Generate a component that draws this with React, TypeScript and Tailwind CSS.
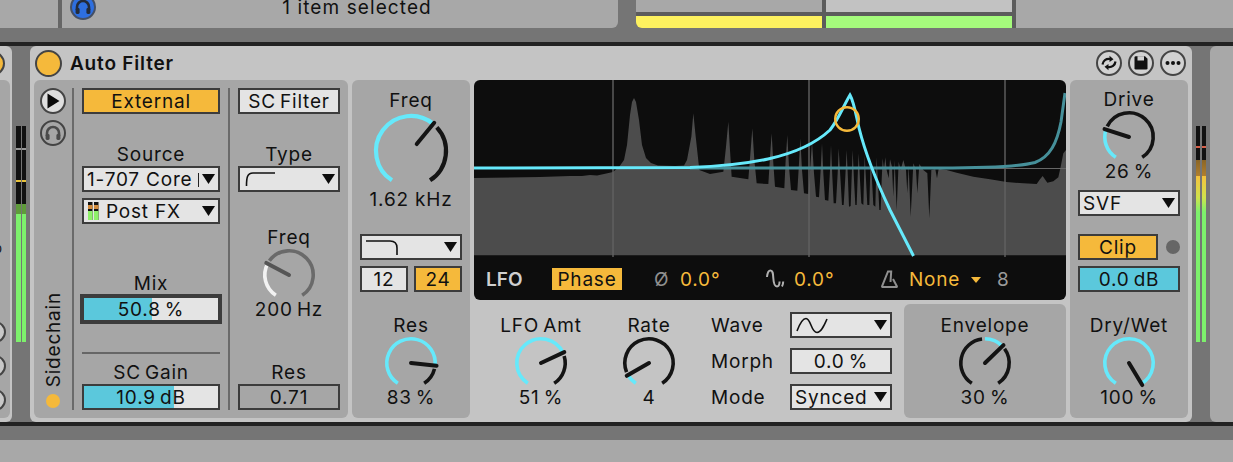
import React from "react";

const CYAN = "#66e9fb";

function pol(c: number, cy: number, r: number, a: number) {
  const t = (a * Math.PI) / 180;
  return [c + r * Math.sin(t), cy - r * Math.cos(t)];
}
function arc(c: number, cy: number, r: number, a: number, b: number) {
  const [x1, y1] = pol(c, cy, r, a);
  const [x2, y2] = pol(c, cy, r, b);
  return `M${x1} ${y1}A${r} ${r} 0 ${b - a > 180 ? 1 : 0} 1 ${x2} ${y2}`;
}

function Dial({
  angle,
  size = 54,
  h = 51,
  r = 24.2,
  sw = 3.6,
  from = -147,
  on = CYAN,
  off = "#141414",
  needle = "#141414",
  start = 0,
  ns = 4,
}: {
  angle: number;
  size?: number;
  h?: number;
  r?: number;
  sw?: number;
  from?: number;
  on?: string;
  off?: string;
  needle?: string;
  start?: number;
  ns?: number;
}) {
  const c = size / 2;
  const end = 147;
  const lo = Math.min(from, angle);
  const hi = Math.max(from, angle);
  const [nx1, ny1] = pol(c, c, start, angle);
  const [nx2, ny2] = pol(c, c, r + 1.5, angle);
  return (
    <svg width={size} height={h} viewBox={`0 0 ${size} ${h}`} className="block overflow-visible">
      <g fill="none" strokeWidth={sw}>
        {lo > -147 && <path d={arc(c, c, r, -147, lo - 7)} stroke={off} />}
        <path d={arc(c, c, r, lo, hi)} stroke={on} />
        {hi + 8 < end && <path d={arc(c, c, r, hi + 8, end)} stroke={off} />}
      </g>
      <line x1={nx1} y1={ny1} x2={nx2} y2={ny2} stroke={needle} strokeWidth={ns} strokeLinecap="round" />
    </svg>
  );
}

function Knob(props: {
  label: string;
  value: string;
  angle: number;
  from?: number;
  on?: string;
  off?: string;
  needle?: string;
}) {
  const { label, value, ...dial } = props;
  return (
    <div className="flex w-[94px] flex-col items-center">
      <div className="flex h-[23px] items-center whitespace-nowrap pt-[1px]">{label}</div>
      <Dial {...dial} />
      <div className="flex h-[20px] items-center whitespace-nowrap pt-[1px]">{value}</div>
    </div>
  );
}

function Caret() {
  return (
    <svg width="13" height="10" viewBox="0 0 13 10" className="shrink-0">
      <path d="M0 0H13L6.5 10Z" fill="#0d0d0d" />
    </svg>
  );
}

function Box({ children, className = "" }: { children?: React.ReactNode; className?: string }) {
  return (
    <div className={`flex h-[26px] items-center justify-center border-2 border-[#3c3c3c] pt-[1px] whitespace-nowrap ${className}`}>
      {children}
    </div>
  );
}

function Select({ children, className = "" }: { children?: React.ReactNode; className?: string }) {
  return (
    <div className={`flex h-[26px] items-center justify-between border-2 border-[#3c3c3c] bg-[#e4e4e4] pl-[3px] pr-[3px] whitespace-nowrap ${className}`}>
      <div className="flex flex-1 items-center pt-[1px]">{children}</div>
      <Caret />
    </div>
  );
}

function RoundBtn({ children, bg = "bg-[#d2d2d2]" }: { children: React.ReactNode; bg?: string }) {
  return (
    <div className={`flex h-[26px] w-[26px] items-center justify-center rounded-full border-2 border-[#444] ${bg}`}>
      {children}
    </div>
  );
}

function Phones({ color = "#444" }: { color?: string }) {
  return (
    <svg width="18" height="18" viewBox="0 0 18 18">
      <path d="M3 12V9a6 6 0 0 1 12 0v3" fill="none" stroke={color} strokeWidth="2.6" />
      <rect x="1.6" y="10" width="4" height="6" rx="1.4" fill={color} />
      <rect x="12.4" y="10" width="4" height="6" rx="1.4" fill={color} />
    </svg>
  );
}

function Meter({ children }: { children: React.ReactNode }) {
  return <div className="flex h-[216px] w-[4.5px] flex-col">{children}</div>;
}

const pagePts: number[][] = [
  [474, 178], [540, 177], [570, 176], [582, 176], [590, 175], [597, 175.5], [604, 174], [613, 172], [619, 167],
  [624, 160], [627, 145], [630, 115], [632, 102], [634, 98], [636, 102], [639, 120], [642, 145], [646, 158],
  [651, 163], [658, 165.5], [675, 166], [684, 165.5], [687, 160],
];
const zoomPts: number[][] = [
  [4, 200], [10, 130], [16, 190], [28, 300], [60, 312], [100, 305], [108, 230], [115, 155], [120, 240], [125, 320], [175, 328],
  [182, 240], [187, 175], [193, 270], [200, 340], [235, 342], [240, 260], [245, 190], [250, 280], [255, 350], [283, 355],
  [287, 270], [292, 195], [297, 290], [303, 360], [322, 362], [327, 280], [331, 205], [336, 300], [342, 370], [355, 372],
  [361, 290], [366, 215], [372, 310], [378, 380], [387, 382], [392, 300], [396, 220], [400, 310], [405, 390], [415, 392],
  [420, 300], [423, 225], [427, 320], [431, 400], [438, 400], [443, 310], [446, 235], [451, 320], [456, 405], [461, 405],
  [466, 320], [470, 240], [474, 330], [477, 410], [482, 408], [485, 320], [488, 240], [492, 330], [496, 405], [500, 405],
  [503, 320], [506, 250], [510, 330], [514, 400], [520, 405], [522, 330], [524, 255], [528, 330], [532, 405], [538, 405],
  [540, 330], [542, 262], [546, 330], [550, 405], [556, 410], [558, 330], [560, 262], [564, 340], [568, 420], [572, 420],
  [575, 330], [578, 265], [582, 300], [586, 262], [590, 300], [596, 325], [600, 268], [606, 290], [610, 380], [614, 270],
  [620, 420], [626, 275], [632, 300], [640, 270], [648, 300], [652, 370], [656, 285], [662, 440], [670, 280], [678, 300],
  [682, 370], [688, 282], [700, 300], [712, 310], [718, 445], [724, 300], [736, 298], [741, 325], [746, 296], [770, 300],
  [800, 308], [850, 320], [900, 328], [950, 336], [1000, 340], [1040, 342], [1050, 328], [1058, 318], [1072, 338], [1090, 334],
  [1105, 322], [1112, 290], [1120, 250], [1128, 240], [1128, 556], [-700, 556],
];
const z = (p: number[]) => [690 + p[0] / 3, 70 + p[1] / 3];
const spectrum = [...pagePts, ...zoomPts.map(z)].map((p) => p.join(",")).join(" ") + " 474,256";

function Spectrum() {
  return (
    <svg width="592" height="177" viewBox="474 80 592 177" className="block">
      <polygon points={spectrum} fill="#4c4c4c" />
      <g stroke="#626262" strokeWidth="1.4">
        <line x1="613" y1="80" x2="613" y2="257" />
        <line x1="809" y1="80" x2="809" y2="257" />
        <line x1="1005" y1="80" x2="1005" y2="257" />
      </g>
      <line x1="720" y1="168.5" x2="1066" y2="168.5" stroke="#666" strokeWidth="1" />
      <path
        d="M690 168H940C1000 168 1022 166 1035 162.5C1050 157 1057 143 1061 122L1065 93"
        fill="none"
        stroke="#46909a"
        strokeWidth="3"
      />
      <path
        d="M474 168L690 167.5C720 166.5 745 164 768 159C795 153 815 144 830 130C838 120 844 105 850 95C854 102 856 115 859 128C864 148 872 172 890 210L913.5 256"
        fill="none"
        stroke={CYAN}
        strokeWidth="3"
      />
      <circle cx="847" cy="119" r="11.8" fill="none" stroke="#f5b93b" strokeWidth="2.4" />
    </svg>
  );
}

export default function App() {
  return (
    <div className="flex h-[462px] w-[1233px] flex-col overflow-hidden bg-[#a6a6a6] text-[19px] leading-none tracking-[0.8px] [word-spacing:-2px] text-[#111] [font-family:Inter,'Liberation_Sans',sans-serif]">
      {/* top strip */}
      <div className="flex h-[28px] shrink-0 bg-[#757575]">
        <div className="w-[58px] bg-[#a8a8a8]" />
        <div className="w-[4px] bg-[#666]" />
        <div className="flex w-[556px] rounded-br-md bg-[#a8a8a8]">
          <div className="ml-[8px] -mt-[6px] h-[26px] w-[26px] rounded-full border-2 border-[#445066] bg-[#2e6fe0] flex items-center justify-center">
            <Phones color="#232b3a" />
          </div>
          <div className="flex h-[14px] flex-1 items-center justify-center whitespace-nowrap pt-[1px] tracking-[1.1px] [word-spacing:0px]">1 item selected</div>
        </div>
        <div className="w-[18px]" />
        <div className="flex w-[186px] flex-col">
          <div className="h-[12px] bg-[#a8a8a8]" />
          <div className="h-[4px] bg-[#5c5c5c]" />
          <div className="h-[12px] rounded-bl-md bg-[#fdf15f]" />
        </div>
        <div className="w-[4px] bg-[#5c5c5c]" />
        <div className="flex w-[186px] flex-col">
          <div className="h-[12px] bg-[#c2c2c2]" />
          <div className="h-[4px] bg-[#5c5c5c]" />
          <div className="h-[12px] bg-[#a5fb7c]" />
        </div>
        <div className="w-[4px] bg-[#5c5c5c]" />
        <div className="flex-1 bg-[#a8a8a8]" />
      </div>
      <div className="h-[14px] shrink-0 bg-[#757575]" />
      <div className="h-[4px] shrink-0 bg-[#222]" />

      {/* device row */}
      <div className="flex h-[376px] shrink-0 bg-[#757575]">
        {/* previous device, cut off */}
        <div className="flex w-[12px] flex-col overflow-hidden rounded-r-md bg-[#c4c4c4]">
          <div className="flex h-[34px] items-center">
            <div className="-ml-[20px] h-[25px] w-[25px] shrink-0 rounded-full border-2 border-[#444] bg-[#f5b93b]" />
          </div>
          <div className="flex h-[338px] w-[10px] flex-col overflow-hidden rounded-r-md bg-[#a6a6a6]">
            <div className="mt-[162px] h-[12px] text-[13px] -ml-[6px]">b</div>
            <div className="mt-[67px] flex flex-col gap-[12px]">
              <div className="-ml-[16px] h-[22px] w-[22px] shrink-0 rounded-full border-2 border-[#444] bg-[#c8c8c8]" />
              <div className="-ml-[16px] h-[22px] w-[22px] shrink-0 rounded-full border-2 border-[#444] bg-[#c8c8c8]" />
              <div className="-ml-[16px] h-[22px] w-[22px] shrink-0 rounded-full border-2 border-[#444] bg-[#c8c8c8]" />
            </div>
          </div>
        </div>
        {/* left meter */}
        <div className="flex w-[18px] justify-center gap-[1px] pt-[80px]">
          {[0, 1].map((i) => (
            <Meter key={i}>
              <div className="h-[22px] bg-[#111]" />
              <div className="h-[1.5px] bg-[#9a9a9a]" />
              <div className="h-[30px] bg-[#111]" />
              <div className="h-[2px] bg-[#e8c23c]" />
              <div className="h-[22.5px] bg-[#111]" />
              <div className="h-[10px] bg-[#5f9b3b]" />
              <div className="flex-1 bg-[#7df06c]" />
            </Meter>
          ))}
        </div>

        {/* Auto Filter */}
        <div className="flex w-[1162px] flex-col rounded-l-md rounded-r-md bg-[#c4c4c4]">
          <div className="flex h-[34px] items-center pl-[5px] pr-[6px]">
            <div className="h-[27px] w-[27px] rounded-full border-2 border-[#444] bg-[#f5b93b]" />
            <div className="ml-[8px] pt-[1px] font-semibold [word-spacing:0px]">Auto Filter</div>
            <div className="ml-auto flex gap-[6px]">
              <RoundBtn>
                <svg width="18" height="18" viewBox="0 0 18 18" fill="none" stroke="#111" strokeWidth="2.2">
                  <path d="M2.5 10.5C3 6.5 6 4.5 10 5" />
                  <path d="M15.5 7.5C15 11.5 12 13.5 8 13" />
                  <path d="M9.5 1.8L13.5 5.2L9.5 8Z" fill="#111" stroke="none" />
                  <path d="M8.5 16.2L4.5 12.8L8.5 10Z" fill="#111" stroke="none" />
                </svg>
              </RoundBtn>
              <RoundBtn>
                <svg width="16" height="16" viewBox="0 0 16 16">
                  <path d="M1.5 2.5Q1.5 1.2 2.8 1.2H12L14.5 3.7V13.2Q14.5 14.5 13.2 14.5H2.8Q1.5 14.5 1.5 13.2Z" fill="#111" />
                  <rect x="4.5" y="1.2" width="6.5" height="4.3" fill="#d2d2d2" />
                </svg>
              </RoundBtn>
              <RoundBtn>
                <svg width="18" height="6" viewBox="0 0 18 6" fill="#111">
                  <circle cx="3.5" cy="3" r="2" />
                  <circle cx="9" cy="3" r="2" />
                  <circle cx="14.5" cy="3" r="2" />
                </svg>
              </RoundBtn>
            </div>
          </div>

          <div className="flex gap-[4px] px-[4px]">
            {/* Sidechain panel */}
            <div className="flex h-[338px] w-[314px] rounded-md bg-[#a6a6a6] pt-[8px]">
              <div className="flex h-[322px] w-[38px] flex-col items-center">
                <RoundBtn bg="bg-[#dedede]">
                  <svg width="14" height="16" viewBox="0 0 14 16">
                    <path d="M1.5 0.5L13.5 8L1.5 15.5Z" fill="#0a0a0a" />
                  </svg>
                </RoundBtn>
                <div className="mt-[6px]">
                  <RoundBtn bg="bg-[#a6a6a6]">
                    <Phones color="#4a4a4a" />
                  </RoundBtn>
                </div>
                <div className="mt-auto [writing-mode:vertical-rl] rotate-180 whitespace-nowrap">Sidechain</div>
                <div className="mb-[2px] mt-[7px] h-[14px] w-[14px] rounded-full bg-[#f5b93b]" />
              </div>
              <div className="h-[322px] w-[1.5px] bg-[#6a6a6a]" />
              <div className="ml-[8.5px] flex w-[138px] flex-col">
                <Box className="bg-[#f5b93b]">External</Box>
                <div className="mt-[27px] flex h-[25px] items-center justify-center pt-[1px]">Source</div>
                <Select>
                  <span className="flex-1 [word-spacing:0px]">1-707 Core</span>
                  <span className="mr-[3px] h-[14px] w-[1px] bg-[#222]" />
                </Select>
                <Select className="mt-[6px]">
                  <svg width="11" height="18" viewBox="0 0 11 18" className="ml-[1px] -mt-[1px]">
                    <rect x="0" y="0" width="4.5" height="18" fill="#111" />
                    <rect x="6" y="0" width="4.5" height="18" fill="#111" />
                    <rect x="0" y="3" width="4.5" height="4" fill="#d08a3c" />
                    <rect x="6" y="3" width="4.5" height="4" fill="#d08a3c" />
                    <rect x="0" y="9" width="4.5" height="9" fill="#8ff06a" />
                    <rect x="6" y="9" width="4.5" height="9" fill="#8ff06a" />
                  </svg>
                  <span className="ml-[7px] flex-1 [word-spacing:0px]">Post FX</span>
                </Select>
                <div className="mt-[47px] flex h-[23px] items-center justify-center pt-[1px]">Mix</div>
                <div className="-mx-[2px] flex h-[30px] items-center justify-center border-4 border-[#3c3c3c] bg-[linear-gradient(to_right,#5bc8dc_50.8%,#e4e4e4_50.8%)] pt-[1px]">
                  50.8 %
                </div>
                <div className="mt-[28px] h-[2px] bg-[#666]" />
                <div className="mt-[5px] flex h-[25px] items-center justify-center pt-[1px]">SC Gain</div>
                <Box className="bg-[linear-gradient(to_right,#5bc8dc_67%,#e4e4e4_67%)]">10.9 dB</Box>
              </div>
              <div className="ml-[8px] h-[322px] w-[1.5px] bg-[#6a6a6a]" />
              <div className="ml-[8.5px] flex w-[102px] flex-col">
                <Box className="bg-[#e4e4e4]">SC Filter</Box>
                <div className="mt-[27px] flex h-[25px] items-center justify-center pt-[1px]">Type</div>
                <Select>
                  <svg width="32" height="16" viewBox="0 0 32 16" fill="none" stroke="#111" strokeWidth="1.6" className="-mt-[1px]">
                    <path d="M3.5 15C3.5 7 4 2 10 2H32" />
                  </svg>
                </Select>
                <div className="mt-[33px] flex justify-center">
                  <Knob label="Freq" value="200 Hz" angle={-62} on="#f2f2f2" off="#6a6a6a" needle="#555" />
                </div>
                <div className="mt-[40px] flex h-[25px] items-center justify-center pt-[1px]">Res</div>
                <Box>0.71</Box>
              </div>
            </div>

            {/* Freq panel */}
            <div className="flex h-[338px] w-[118px] flex-col items-center rounded-md bg-[#a6a6a6] pt-[8px]">
              <div className="flex h-[24px] items-center pt-[1px]">Freq</div>
              <Dial angle={39.5} size={78} h={77} r={35} sw={4.2} start={9} ns={4} />
              <div className="flex h-[20px] items-center whitespace-nowrap pt-[1px] [word-spacing:0px]">1.62 kHz</div>
              <Select className="mt-[25px] w-[102px]">
                <svg width="34" height="16" viewBox="0 0 34 16" fill="none" stroke="#111" strokeWidth="1.6" className="ml-[1px] -mt-[1px]">
                  <path d="M0 2H24C29 2 31 5 31 9V16" />
                </svg>
              </Select>
              <div className="mt-[6px] flex w-[102px] justify-between">
                <Box className="w-[48px] bg-[#e4e4e4]">12</Box>
                <Box className="w-[48px] bg-[#f5b93b]">24</Box>
              </div>
              <div className="mt-[21px]">
                <Knob label="Res" value="83 %" angle={96} />
              </div>
            </div>

            {/* Centre */}
            <div className="flex w-[592px] flex-col">
              <div className="h-[220px] overflow-hidden rounded-md bg-[#0d0d0d]">
                <Spectrum />
                <div className="flex h-[43px] items-center text-[#f5b93b]">
                  <span className="ml-[12px] w-[66px] pt-[1px] font-semibold tracking-normal text-[#cfcfcf]">LFO</span>
                  <span className="flex h-[22px] w-[70px] items-center justify-center bg-[#f5b93b] pt-[1px] text-[#111]">Phase</span>
                  <span className="ml-[32px] w-[26px] pt-[1px] text-[#8f8f8f]">Ø</span>
                  <span className="w-[86px] pt-[1px]">0.0°</span>
                  <svg width="20" height="20" viewBox="0 0 20 20" fill="none" stroke="#b0b0b0" strokeWidth="2" className="mt-[1px]">
                    <path d="M1 8C1.5 3 3 1.5 4.5 1.5C7 1.5 7 5 7.3 9C7.6 14 9 17.5 11 17.5C12.8 17.5 13.5 15 13.6 12.5" />
                    <path d="M17.2 12.5C17.2 14.5 16.8 16 16 17.5" />
                  </svg>
                  <span className="ml-[8px] w-[87px] pt-[1px]">0.0°</span>
                  <svg width="17" height="19" viewBox="0 0 17 19" fill="none" stroke="#8f8f8f" strokeWidth="2" className="mt-[1px]">
                    <path d="M0.8 17L7 1.5H10.2L9.5 12" />
                    <path d="M12 9L16.2 17" />
                    <path d="M0.5 17H16.5" />
                  </svg>
                  <span className="ml-[11px] w-[62px] pt-[1px]">None</span>
                  <svg width="10" height="6" viewBox="0 0 10 6" className="mt-[2px]">
                    <path d="M0 0H10L5 6Z" fill="#f5b93b" />
                  </svg>
                  <span className="ml-[16px] pt-[1px] text-[#9a9a9a]">8</span>
                </div>
              </div>
              <div className="mt-[4px] flex">
                <div className="ml-[20px] mt-[9px]">
                  <Knob label="LFO Amt" value="51 %" angle={65} />
                </div>
                <div className="ml-[14px] mt-[9px]">
                  <Knob label="Rate" value="4" angle={-120} />
                </div>
                <div className="ml-[15px] mt-[8px] flex w-[79px] flex-col gap-[10px]">
                  <div className="flex h-[26px] items-center pt-[1px]">Wave</div>
                  <div className="flex h-[26px] items-center pt-[1px]">Morph</div>
                  <div className="flex h-[26px] items-center pt-[1px]">Mode</div>
                </div>
                <div className="mt-[8px] flex w-[102px] flex-col gap-[10px]">
                  <Select>
                    <svg width="32" height="17" viewBox="0 0 32 17" fill="none" stroke="#111" strokeWidth="1.6" className="ml-[1px] -mt-[1px]">
                      <path d="M1 14C4 6 7 1.5 10 1.5C15 1.5 15 15.5 21 15.5C25 15.5 28 9 31 2" />
                    </svg>
                  </Select>
                  <Box className="bg-[#e4e4e4]">0.0 %</Box>
                  <Select>
                    <span>Synced</span>
                  </Select>
                </div>
                <div className="ml-[12px] flex h-[114px] w-[162px] justify-center rounded-md bg-[#a6a6a6] pt-[9px]">
                  <Knob label="Envelope" value="30 %" angle={46} from={0} />
                </div>
              </div>
            </div>

            {/* Right panel */}
            <div className="flex h-[338px] w-[118px] flex-col items-center rounded-md bg-[#a6a6a6] pt-[7px]">
              <Knob label="Drive" value="26 %" angle={-72} />
              <Select className="mt-[9px] w-[102px]">
                <span>SVF</span>
              </Select>
              <div className="mt-[18px] flex w-[102px] items-center justify-between">
                <Box className="w-[80px] bg-[#f5b93b]">Clip</Box>
                <div className="h-[14px] w-[14px] rounded-full bg-[#666]" />
              </div>
              <Box className="mt-[6px] w-[102px] bg-[#5bc8dc]">0.0 dB</Box>
              <div className="mt-[21px]">
                <Knob label="Dry/Wet" value="100 %" angle={149} from={-147} />
              </div>
            </div>
          </div>
        </div>

        {/* right meter */}
        <div className="flex w-[18px] justify-center gap-[1.5px] pt-[80px]">
          {[0, 1].map((i) => (
            <Meter key={i}>
              <div className="h-[20px] bg-[#111]" />
              <div className="h-[1.5px] bg-[#d8604a]" />
              <div className="h-[12.5px] bg-[#111]" />
              <div className="h-[16px] bg-[linear-gradient(to_bottom,#8a6526,#b07f2e)]" />
              <div className="h-[36px] bg-[linear-gradient(to_bottom,#f5c23e,#cfe24c_60%,#7df06c)]" />
              <div className="flex-1 bg-[#7df06c]" />
            </Meter>
          ))}
        </div>
        <div className="flex-1 rounded-l-md bg-[#a8a8a8]" />
      </div>

      <div className="h-[4px] shrink-0 bg-[#222]" />
      <div className="h-[14px] shrink-0 bg-[#757575]" />
      <div className="flex-1 bg-[#a8a8a8]" />
    </div>
  );
}
